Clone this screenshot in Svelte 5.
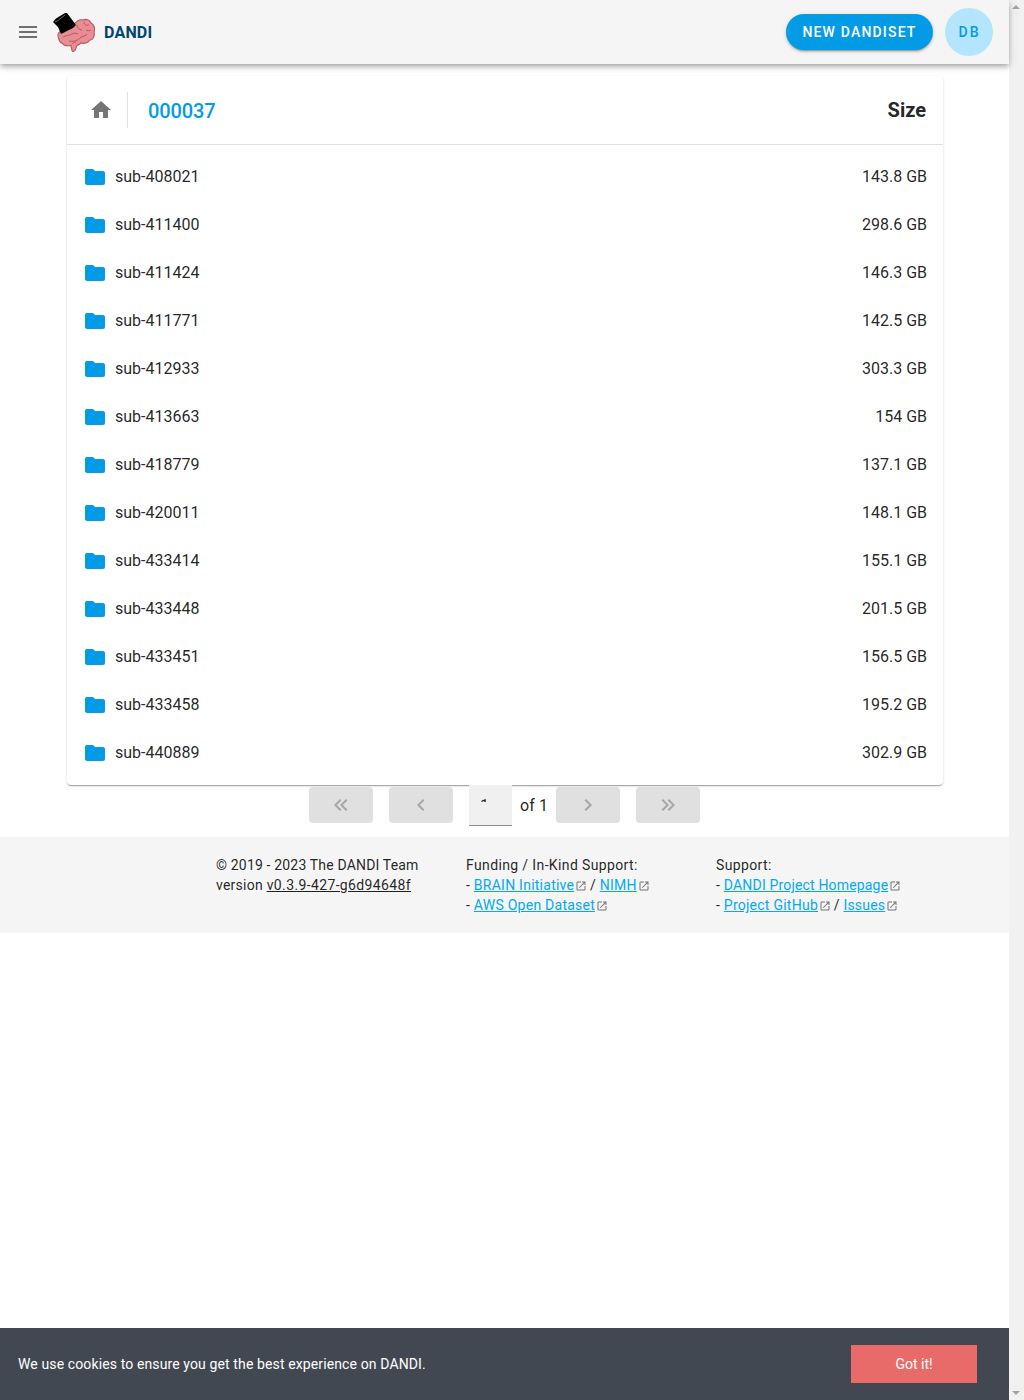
<script>
  const folders = [
    ["sub-408021", "143.8 GB"],
    ["sub-411400", "298.6 GB"],
    ["sub-411424", "146.3 GB"],
    ["sub-411771", "142.5 GB"],
    ["sub-412933", "303.3 GB"],
    ["sub-413663", "154 GB"],
    ["sub-418779", "137.1 GB"],
    ["sub-420011", "148.1 GB"],
    ["sub-433414", "155.1 GB"],
    ["sub-433448", "201.5 GB"],
    ["sub-433451", "156.5 GB"],
    ["sub-433458", "195.2 GB"],
    ["sub-440889", "302.9 GB"]
  ];
</script>

{#snippet ext()}
  <svg class="ext" viewBox="0 0 24 24"><path d="M19 19H5V5h7V3H5a2 2 0 0 0-2 2v14a2 2 0 0 0 2 2h14a2 2 0 0 0 2-2v-7h-2v7zM14 3v2h3.59l-9.83 9.83 1.41 1.41L19 6.41V10h2V3h-7z" /></svg>
{/snippet}

<div class="shell">
  <div class="page">
    <header class="bar">
      <svg class="menu" viewBox="0 0 24 24"><path d="M3 18h18v-2H3v2zm0-5h18v-2H3v2zm0-7v2h18V6H3z" /></svg>
      <svg class="logo" viewBox="0 0 42 42">
        <path d="M5.500 28C4 24 6 21 9 21C11 18 15 15 20 16C22 12 26 9 30 10C33 8.500 37 10 38 13C41 14 42.500 19 41 22C42 26 40 30 37 30C35 33 31 34 28 33C26 35 24 35 23.500 36C23 39 22 41.500 20 41.500C18.500 41.500 18.500 38 18 35.500C15 36 11 36 9.500 33.500C7.500 33 6 30 5.500 28Z" fill="#e98d95" stroke="#b5585e" stroke-width="1.100" />
        <path d="M10 27c3-2 6-1 9-3 2-1 4-1 6 0M24 15c0 3 2 5 5 5M31 12c0 2 2 4 5 3M16 31c4 1 9 0 12-4 2-1 5-1 6-3M33 20c1 1 3 1 5 0M19 34c1-1 2-2 4-2" fill="none" stroke="#b5585e" stroke-width="1" />
        <path d="M0 12 3 8.500 12 3h2l9 12-3 3-12 6-3-7-3-3z" fill="#000" />
        <path d="M2 12c3-1 6-4 10-7" fill="none" stroke="#bbb" stroke-width=".6" />
      </svg>
      <span class="brand">DANDI</span>
      <span class="spacer"></span>
      <button class="new">NEW DANDISET</button>
      <div class="avatar">DB</div>
    </header>

    <main class="container">
      <section class="card">
        <div class="head">
          <svg class="home" viewBox="0 0 24 24"><path d="M10 20v-6h4v6h5v-8h3L12 3 2 12h3v8z" /></svg>
          <span class="sep"></span>
          <a class="crumb" href="#top">000037</a>
          <span class="spacer"></span>
          <strong class="size">Size</strong>
        </div>
        <ul class="list">
          {#each folders as [name, size]}
            <li>
              <svg class="folder" viewBox="0 0 24 24"><path d="M10 4H4c-1.100 0-2 .9-2 2v12c0 1.100.9 2 2 2h16c1.100 0 2-.9 2-2V8c0-1.100-.9-2-2-2h-8l-2-2z" /></svg>
              <span class="name">{name}</span>
              <span class="spacer"></span>
              <span class="amount">{size}</span>
            </li>
          {/each}
        </ul>
      </section>

      <nav class="pager">
        <button aria-label="First page"><svg viewBox="0 0 24 24"><path d="M18.400 16.600 13.800 12l4.600-4.600L17 6l-6 6 6 6zM12.400 16.600 7.800 12l4.600-4.600L11 6l-6 6 6 6z" /></svg></button>
        <button aria-label="Previous page"><svg viewBox="0 0 24 24"><path d="M15.400 7.400 14 6l-6 6 6 6 1.400-1.400-4.600-4.600z" /></svg></button>
        <div class="page-input"><span class="clip">1</span></div>
        <span class="of">of 1</span>
        <button aria-label="Next page"><svg viewBox="0 0 24 24"><path d="M10 6 8.600 7.400l4.600 4.600-4.600 4.600L10 18l6-6z" /></svg></button>
        <button aria-label="Last page"><svg viewBox="0 0 24 24"><path d="M5.600 7.400 10.200 12l-4.600 4.600L7 18l6-6-6-6zM11.600 7.400l4.600 4.600-4.600 4.600L13 18l6-6-6-6z" /></svg></button>
      </nav>
    </main>

    <footer class="foot">
      <div class="cols">
        <div>
          <span class="tight">© 2019 - 2023 The DANDI Team</span><br />
          version <a class="plain wide" href="#top">v0.3.9-427-g6d94648f</a>
        </div>
        <div>
          <span class="wide">Funding / In-Kind Support:</span><br />
          - <a href="#top">BRAIN Initiative</a>{@render ext()} / <a href="#top">NIMH</a>{@render ext()}<br />
          - <a href="#top">AWS Open Dataset</a>{@render ext()}
        </div>
        <div>
          <span class="wide">Support:</span><br />
          - <a class="tight" href="#top">DANDI Project Homepage</a>{@render ext()}<br />
          - <a href="#top">Project GitHub</a>{@render ext()} / <a class="tight" href="#top">Issues</a>{@render ext()}
        </div>
      </div>
    </footer>

    <div class="cookie">
      <span>We use cookies to ensure you get the best experience on DANDI.</span>
      <button class="got">Got it!</button>
    </div>
  </div>

  <aside class="scroll">
    <span class="up"></span>
    <span class="down"></span>
  </aside>
</div>

<style>
  :global(body) {
    margin: 0;
    background: #fff;
    font-family: Roboto, "Liberation Sans", sans-serif;
    color: rgba(0, 0, 0, 0.87);
  }
  .shell {
    display: flex;
    height: 1400px;
    overflow: hidden;
  }
  .page {
    position: relative;
    flex: 1;
    min-width: 0;
  }
  .spacer {
    flex: 1;
  }
  .bar {
    position: relative;
    z-index: 1;
    display: flex;
    align-items: center;
    height: 64px;
    padding: 0 16px;
    box-sizing: border-box;
    background: #f5f5f5;
    box-shadow: 0 2px 4px -1px rgba(0, 0, 0, 0.2), 0 4px 5px 0 rgba(0, 0, 0, 0.14), 0 1px 10px 0 rgba(0, 0, 0, 0.12);
  }
  .menu {
    width: 24px;
    height: 24px;
    fill: rgba(0, 0, 0, 0.54);
  }
  .logo {
    width: 42px;
    height: 42px;
    margin-left: 13px;
    margin-bottom: 2px;
  }
  .brand {
    margin-left: 9px;
    font-size: 16px;
    font-weight: 700;
    letter-spacing: 0.2px;
    color: #01466e;
  }
  .new {
    height: 36px;
    width: 147px;
    padding: 0;
    border: 0;
    border-radius: 18px;
    background: #039be5;
    color: #fff;
    font: 500 14px Roboto, sans-serif;
    letter-spacing: 1.18px;
    box-shadow: 0 3px 1px -2px rgba(0, 0, 0, 0.2), 0 2px 2px 0 rgba(0, 0, 0, 0.14), 0 1px 5px 0 rgba(0, 0, 0, 0.12);
  }
  .avatar {
    display: flex;
    align-items: center;
    justify-content: center;
    width: 48px;
    height: 48px;
    margin: 0 0 0 12px;
    padding-left: 1px;
    box-sizing: border-box;
    border-radius: 50%;
    background: #b3e5fc;
    color: #039be5;
    font-size: 14px;
    font-weight: 500;
    letter-spacing: 0.15em;
  }
  .container {
    width: 900px;
    margin-left: 55px;
    padding: 12px 12px 0;
    box-sizing: border-box;
  }
  .card {
    background: #fff;
    border-radius: 4px;
    box-shadow: 0 2px 1px -1px rgba(0, 0, 0, 0.2), 0 1px 1px 0 rgba(0, 0, 0, 0.14), 0 1px 3px 0 rgba(0, 0, 0, 0.12);
  }
  .head {
    display: flex;
    align-items: center;
    height: 68px;
    padding: 0 17px 0 22px;
    border-bottom: 1px solid #e0e0e0;
  }
  .home {
    width: 24px;
    height: 24px;
    fill: #757575;
  }
  .sep {
    width: 1px;
    height: 36px;
    margin: 0 20px 0 14px;
    background: #e0e0e0;
  }
  .crumb {
    padding-top: 2px;
    color: #039be5;
    font-size: 20px;
    font-weight: 500;
    letter-spacing: -0.1px;
    text-decoration: none;
  }
  .size {
    font-size: 20px;
    font-weight: 700;
  }
  .list {
    list-style: none;
    margin: 0;
    padding: 8px 0;
  }
  .list li {
    display: flex;
    align-items: center;
    height: 48px;
    padding: 0 16px;
    font-size: 16px;
  }
  .folder {
    width: 24px;
    height: 24px;
    fill: #039be5;
  }
  .name {
    margin-left: 8px;
    padding-bottom: 2px;
  }
  .amount {
    padding-bottom: 2px;
  }
  .pager {
    display: flex;
    align-items: center;
    justify-content: center;
    gap: 16px;
    height: 40px;
    padding-right: 1px;
  }
  .pager button {
    display: flex;
    align-items: center;
    justify-content: center;
    width: 64px;
    height: 36px;
    padding: 0;
    border: 0;
    border-radius: 4px;
    background: #e0e0e0;
  }
  .pager svg {
    width: 24px;
    height: 24px;
    fill: #a6a6a6;
  }
  .page-input {
    width: 43px;
    height: 41px;
    box-sizing: border-box;
    padding: 14px 0 0 11px;
    background: #f0f0f0;
    border-bottom: 1px solid #8f8f8f;
  }
  .clip {
    display: block;
    width: 6px;
    height: 3px;
    overflow: hidden;
    font-size: 16px;
    line-height: 14px;
  }
  .of {
    margin: 0 -8px;
    font-size: 16px;
    letter-spacing: 0.1px;
  }
  .foot {
    margin-top: 12px;
    height: 96px;
    padding-top: 18px;
    box-sizing: border-box;
    background: #f5f5f5;
    font-size: 14px;
    line-height: 20px;
    letter-spacing: 0.0178571429em;
  }
  .cols {
    display: grid;
    grid-template-columns: repeat(3, 250px);
    padding-left: 216px;
    white-space: nowrap;
  }
  .foot a {
    color: #03a9f4;
  }
  .foot a.plain {
    color: inherit;
  }
  .wide {
    letter-spacing: 0.37px;
  }
  .tight {
    letter-spacing: 0.17px;
  }
  .ext {
    width: 12px;
    height: 12px;
    margin: 0 -1px 0 1px;
    vertical-align: -2px;
    fill: #757575;
  }
  .cookie {
    position: absolute;
    z-index: 2;
    left: 0;
    right: 0;
    bottom: 0;
    display: flex;
    align-items: center;
    justify-content: space-between;
    height: 72px;
    padding: 0 32px 0 18px;
    box-sizing: border-box;
    background: #424851;
    color: #fff;
    font-size: 14px;
    letter-spacing: 0.12px;
  }
  .got {
    width: 126px;
    height: 38px;
    border: 0;
    background: #e96b69;
    color: #fff;
    font: 14px Roboto, sans-serif;
  }
  .scroll {
    position: relative;
    width: 15px;
    background: #f1f1f1;
  }
  .up,
  .down {
    position: absolute;
    left: 3px;
    width: 0;
    height: 0;
    border-left: 4px solid transparent;
    border-right: 4px solid transparent;
  }
  .up {
    top: 5px;
    border-bottom: 4px solid #a3a3a3;
  }
  .down {
    bottom: 5px;
    border-top: 4px solid #a3a3a3;
  }
</style>
